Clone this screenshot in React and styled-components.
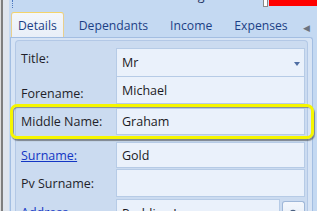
import React from 'react'
import styled, { createGlobalStyle } from 'styled-components';

const GlobalStyle = createGlobalStyle`
    html, body {
        margin: 0;
        padding: 0;
        background: #c4d9f2;
    }
`;

const tabs = ['Details', 'Dependants', 'Income', 'Expenses'];

function App() {
    return (
        <Frame>
            <GlobalStyle />
            <Gutter>
                <Grip />
            </Gutter>
            <Main>
                <TopStrip>
                    <CutText $left={30}>Find and surname</CutText>
                    <CutText $left={38}>Logon Details</CutText>
                    <Check />
                    <RedBox>
                        <CutText $left={6} $color="#ffff40">Full Postcode</CutText>
                    </RedBox>
                </TopStrip>
                <TabBar>
                    {tabs.map((t, i) => (
                        <Tab key={t} $active={i === 0}>{t}</Tab>
                    ))}
                    <ScrollArrow>◀</ScrollArrow>
                </TabBar>
                <TabPage>
                    <Group>
                        <Row>
                            <Label $nudge={-8}>Title:</Label>
                            <Field>
                                Mr
                                <DropArrow />
                            </Field>
                        </Row>
                        <Row $gap={-1} $h={28}>
                            <Label $nudge={6}>Forename:</Label>
                            <Field>Michael</Field>
                        </Row>
                        <Highlight>
                            <Row $h={27}>
                                <Label>Middle Name:</Label>
                                <Field>Graham</Field>
                            </Row>
                        </Highlight>
                        <Row $gap={3} $h={26}>
                            <Label $link $nudge={1}>Surname:</Label>
                            <Field>Gold</Field>
                        </Row>
                        <Row $gap={1} $h={28}>
                            <Label>Pv Surname:</Label>
                            <Field></Field>
                        </Row>
                        <Row $gap={2} $h={28}>
                            <Label $link $nudge={-2}>Address</Label>
                            <AddressCell>
                                <Field>Pudding Lane</Field>
                                <LookupButton>
                                    <svg width="12" height="12" viewBox="0 0 12 12">
                                        <circle cx="5" cy="5" r="3.5" fill="none" stroke="#4a5f80" strokeWidth="1.3" />
                                        <path d="M7.6 7.6 L11 11" stroke="#4a5f80" strokeWidth="1.6" />
                                    </svg>
                                </LookupButton>
                            </AddressCell>
                        </Row>
                    </Group>
                </TabPage>
            </Main>
        </Frame>
    )
}

const Frame = styled.div`
    display: flex;
    width: 317px;
    height: 211px;
    overflow: hidden;
    background: #c4d9f2;
    font-family: "Open Sans", "Noto Sans", sans-serif;
`;

const Gutter = styled.div`
    flex: none;
    width: 10px;
    background: linear-gradient(to right, #dcdcdc 0 1px, #7e7e7e 1px 3px, #dfe5ee 3px 9px, #c4d9f2 9px);
`;

const Grip = styled.div`
    width: 3px;
    height: 8px;
    margin-left: 12px;
    border-left: 1px dotted #4d79c0;
`;

const Main = styled.div`
    flex: 1;
    min-width: 0;
    display: flex;
    flex-direction: column;
`;

const TopStrip = styled.div`
    flex: none;
    height: 10px;
    display: flex;
    align-items: flex-start;
    overflow: hidden;
`;

const CutText = styled.span`
    margin-left: ${p => p.$left}px;
    margin-top: -12px;
    font-size: 12.5px;
    line-height: 16px;
    white-space: nowrap;
    color: ${p => p.$color || '#1e3264'};
`;

const Check = styled.div`
    flex: none;
    width: 3px;
    height: 6px;
    margin-left: auto;
    background: #ffffff;
    border: 1px solid #8a8a8a;
    border-top: none;
`;

const RedBox = styled.div`
    flex: none;
    width: 75px;
    height: 6px;
    margin-left: 1px;
    display: flex;
    overflow: hidden;
    background: #ff0000;
    font-weight: bold;
`;

const TabBar = styled.div`
    flex: none;
    height: 27px;
    display: flex;
    align-items: flex-end;
    gap: 8px;
    padding-left: 1px;
`;

const Tab = styled.div`
    height: 24px;
    padding: 0 6px;
    display: flex;
    align-items: center;
    font-size: 12.2px;
    color: #1c3f86;
    border: 1px solid ${p => (p.$active ? '#e8cf8e' : 'transparent')};
    border-top-color: ${p => (p.$active ? '#f4d46a' : 'transparent')};
    border-bottom: none;
    border-radius: 3px 3px 0 0;
    background: ${p => (p.$active ? 'linear-gradient(#f3f6fb, #e9eff8)' : 'transparent')};
`;

const ScrollArrow = styled.div`
    margin-left: auto;
    margin-right: 8px;
    align-self: center;
    margin-top: 8px;
    font-size: 9px;
    color: #6b7380;
`;

const TabPage = styled.div`
    flex: 1;
    margin-right: 4px;
    padding: 2px 4px 0 4px;
    border: 1px solid #a3bee2;
    border-bottom: none;
    border-radius: 0 3px 0 0;
    background: #d7e4f5;
`;

const Group = styled.div`
    height: 100%;
    padding: 7px 2px 0 5px;
    border: 1px solid #b3c8e6;
    border-bottom: none;
    border-radius: 4px 4px 0 0;
    background: #cbdbf0;
`;

const Row = styled.div`
    display: grid;
    grid-template-columns: 95px 1fr;
    height: ${p => p.$h || 29}px;
    margin-top: ${p => p.$gap || 0}px;
`;

const Label = styled.div`
    display: flex;
    align-items: center;
    padding-top: ${p => (p.$nudge > 0 ? p.$nudge : 0)}px;
    padding-bottom: ${p => (p.$nudge < 0 ? -p.$nudge : 0)}px;
    font-size: 12.5px;
    color: ${p => (p.$link ? '#1336c4' : '#1f1f2a')};
    text-decoration: ${p => (p.$link ? 'underline' : 'none')};
    white-space: nowrap;
`;

const Field = styled.div`
    flex: 1;
    display: flex;
    align-items: center;
    padding-left: 5px;
    border: 1px solid #b6cbe6;
    background: #eaf1fb;
    font-size: 12.5px;
    color: #1a1a24;
    white-space: nowrap;
`;

const DropArrow = styled.div`
    margin-left: auto;
    margin-right: 4px;
    margin-top: 2px;
    border-left: 3.5px solid transparent;
    border-right: 3.5px solid transparent;
    border-top: 4px solid #4f6ea3;
`;

const Highlight = styled.div`
    margin: 0 -9px 0 -11px;
    padding: 1px 6px 1px 8px;
    border: 3px solid #f6f600;
    border-radius: 7px;
    box-shadow: 1px 2px 1px rgba(60, 60, 60, 0.55), inset 1px 1px 1px rgba(60, 60, 60, 0.5);
`;

const AddressCell = styled.div`
    display: flex;
    gap: 2px;
`;

const LookupButton = styled.div`
    flex: none;
    width: 21px;
    margin-top: 2px;
    display: flex;
    justify-content: center;
    align-items: center;
    border: 1px solid #9fb7d8;
    border-bottom: none;
    border-radius: 3px 3px 0 0;
    background: linear-gradient(#f4f7fc, #dde8f6);
`;

export default App
